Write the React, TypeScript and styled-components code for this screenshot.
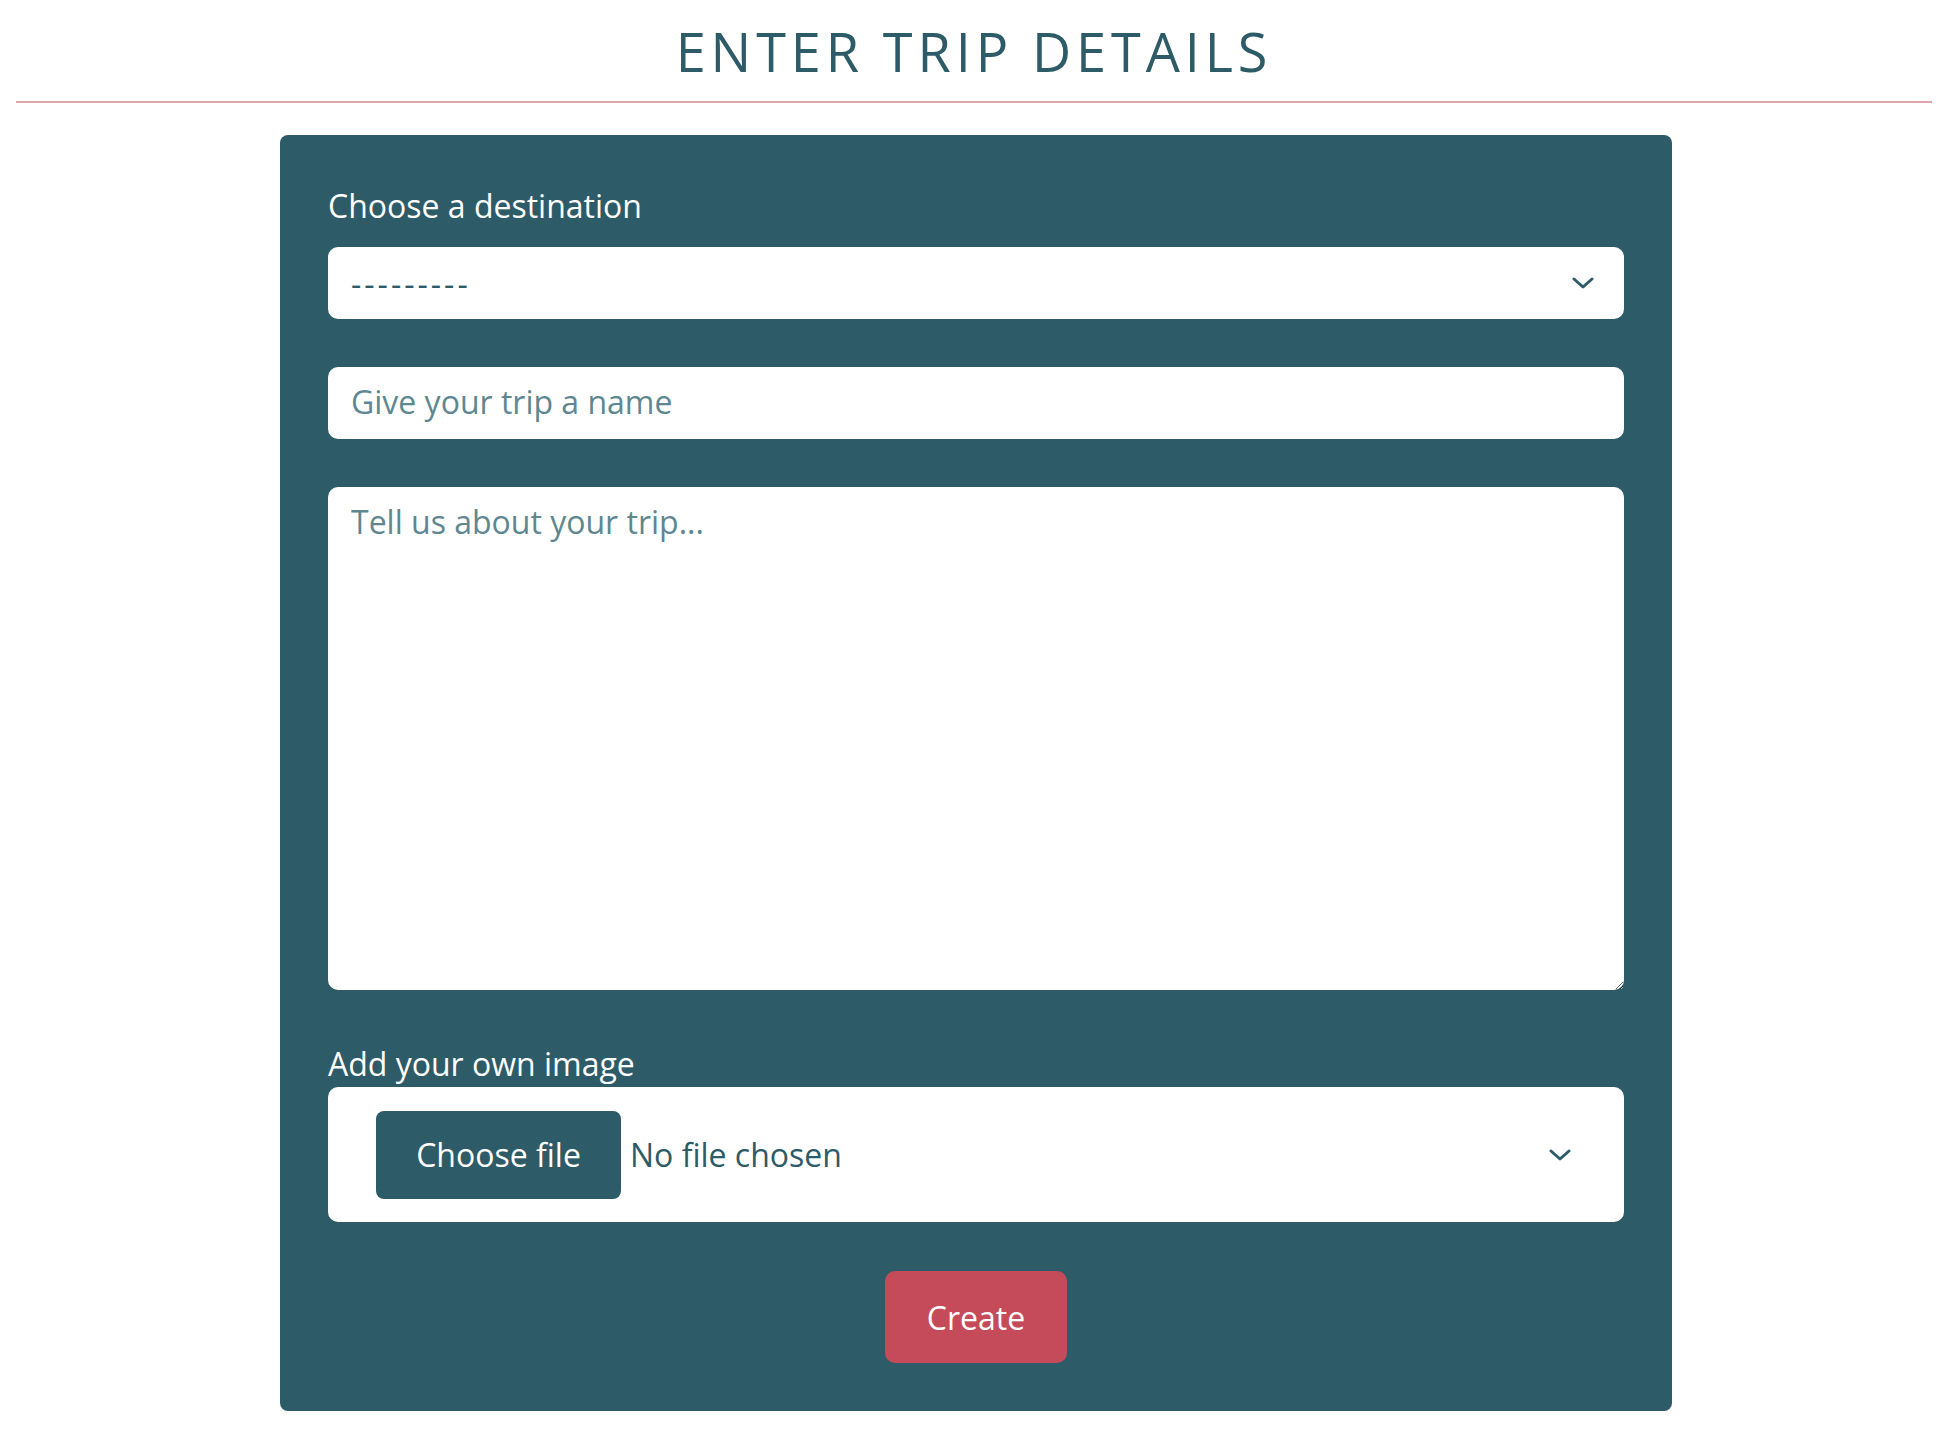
import React from "react";
import styled, { createGlobalStyle } from "styled-components";

const TEAL = "#2d5b67";
const FONT = `"Open Sans", "Liberation Sans", sans-serif`;

const Global = createGlobalStyle`
  html, body { margin: 0; padding: 0; background: #ffffff; }
  body { font-family: ${FONT}; color: ${TEAL}; }
  * { box-sizing: border-box; }
`;

const Page = styled.main`
  display: flex;
  flex-direction: column;
  align-items: center;
  padding: 0 16px 40px;
`;

const Header = styled.header`
  width: 100%;
  display: flex;
  flex-direction: column;
  align-items: center;
`;

const Title = styled.h1`
  margin: 24px 0 0;
  font-family: ${FONT};
  font-size: 54px;
  line-height: 54px;
  font-weight: 400;
  letter-spacing: 4.9px;
  color: ${TEAL};
`;

const Rule = styled.hr`
  width: 100%;
  margin: 23px 0 0;
  border: none;
  height: 2px;
  background: #e0a4ab;
`;

const Card = styled.form`
  margin: 32px 0 0 4px;
  width: 1392px;
  background: ${TEAL};
  border-radius: 8px;
  padding: 52px 48px 48px;
  display: flex;
  flex-direction: column;
`;

const Label = styled.label<{ $gap: number; $top?: number }>`
  display: block;
  font-size: 32px;
  line-height: 38px;
  color: #ffffff;
  margin-top: ${(p) => p.$top ?? 0}px;
  margin-bottom: ${(p) => p.$gap}px;
`;

const SelectWrap = styled.div`
  position: relative;
  width: 100%;
`;

const Select = styled.select`
  appearance: none;
  -webkit-appearance: none;
  width: 100%;
  height: 72px;
  border: none;
  border-radius: 10px;
  background: #ffffff;
  padding: 0 60px 0 23px;
  font-family: ${FONT};
  font-size: 32px;
  letter-spacing: 3px;
  color: ${TEAL};
  outline: none;
`;

const Chevron = styled.svg<{ $right: number }>`
  position: absolute;
  top: 50%;
  right: ${(p) => p.$right}px;
  width: 22px;
  height: 12px;
  transform: translateY(-50%);
  pointer-events: none;
`;

const TextInput = styled.input`
  margin-top: 48px;
  width: 100%;
  height: 72px;
  border: none;
  border-radius: 10px;
  background: #ffffff;
  padding: 0 23px 3px;
  font-family: ${FONT};
  font-size: 32px;
  color: ${TEAL};
  outline: none;
  &::placeholder { color: #5e8791; opacity: 1; }
`;

const TextArea = styled.textarea`
  margin-top: 48px;
  width: 100%;
  height: 503px;
  border: none;
  border-radius: 10px;
  background: #ffffff;
  padding: 13px 23px 12px;
  font-family: ${FONT};
  font-size: 32px;
  color: ${TEAL};
  outline: none;
  resize: vertical;
  &::placeholder { color: #5e8791; opacity: 1; }
`;

const FileBox = styled.div`
  position: relative;
  display: flex;
  align-items: center;
  gap: 9px;
  height: 135px;
  border-radius: 10px;
  background: #ffffff;
  padding: 0 48px;
`;

const HiddenInput = styled.input`
  display: none;
`;

const FileButton = styled.label`
  display: flex;
  align-items: center;
  justify-content: center;
  width: 245px;
  height: 88px;
  border-radius: 8px;
  background: ${TEAL};
  color: #ffffff;
  font-size: 32px;
  cursor: pointer;
`;

const FileName = styled.span`
  font-size: 32px;
  color: ${TEAL};
`;

const CreateButton = styled.button`
  align-self: center;
  margin-top: 49px;
  width: 182px;
  height: 92px;
  border: none;
  border-radius: 10px;
  background: #c54b5a;
  color: #ffffff;
  font-family: ${FONT};
  font-size: 32px;
  cursor: pointer;
`;

const ChevronIcon = ({ right }: { right: number }) => (
  <Chevron $right={right} viewBox="0 0 22 12" fill="none">
    <path d="M2 2 L11 10 L20 2" stroke={TEAL} strokeWidth="3" strokeLinecap="round" strokeLinejoin="round" />
  </Chevron>
);

export default function App() {
  return (
    <>
      <Global />
      <Page>
        <Header>
          <Title>ENTER TRIP DETAILS</Title>
          <Rule />
        </Header>
        <Card onSubmit={(e) => e.preventDefault()}>
          <Label htmlFor="dest" $gap={22}>Choose a destination</Label>
          <SelectWrap>
            <Select id="dest" defaultValue="">
              <option value="">---------</option>
            </Select>
            <ChevronIcon right={30} />
          </SelectWrap>
          <TextInput type="text" placeholder="Give your trip a name" />
          <TextArea placeholder="Tell us about your trip..." />
          <Label htmlFor="img" $gap={4} $top={55}>Add your own image</Label>
          <FileBox>
            <HiddenInput id="img" type="file" />
            <FileButton htmlFor="img">Choose file</FileButton>
            <FileName>No file chosen</FileName>
            <ChevronIcon right={53} />
          </FileBox>
          <CreateButton type="submit">Create</CreateButton>
        </Card>
      </Page>
    </>
  );
}
